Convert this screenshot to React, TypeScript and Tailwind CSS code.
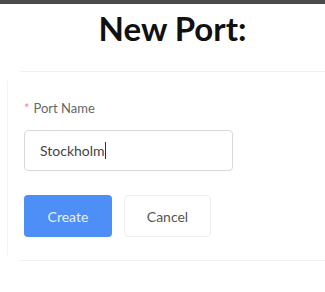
export default function App() {
  return (
    <div className="w-[325px] h-[292px] bg-white overflow-hidden" style={{ fontFamily: "Lato, 'Open Sans', sans-serif" }}>
      <div className="h-[4px] bg-[#4a4a4a]" />
      <h1 className="h-[48px] flex items-center justify-center pl-[20px] text-[33px] font-bold text-[#111] leading-none">
        New Port:
      </h1>
      <div className="mt-[19px] ml-[20px] border-t border-[#f0f0f0]" />
      <div className="ml-[7px] mt-[9px] border-l border-[#f3f3f3] pl-[16px] pt-[21px] pb-[18px]">
        <div className="text-[13px] text-[#666] leading-none">
          <span className="text-[#f08a8a] mr-1">*</span>Port Name
        </div>
        <div className="mt-[15px] w-[209px] h-[41px] border border-[#d9d9d9] rounded-[4px] flex items-center px-[15px] text-[14px] text-[#444]">
          Stockholm<span className="w-px h-[17px] bg-[#333]" />
        </div>
        <div className="mt-[24px] flex gap-[12px]">
          <button className="w-[88px] h-[42px] rounded-[4px] bg-[#4d8ef7] text-[#e8f0ff] text-[14px]">Create</button>
          <button className="w-[87px] h-[42px] rounded-[4px] border border-[#eeeeee] text-[#555] text-[14px]">Cancel</button>
        </div>
      </div>
      <div className="mt-[5px] ml-[20px] border-t border-[#f0f0f0]" />
    </div>
  );
}
